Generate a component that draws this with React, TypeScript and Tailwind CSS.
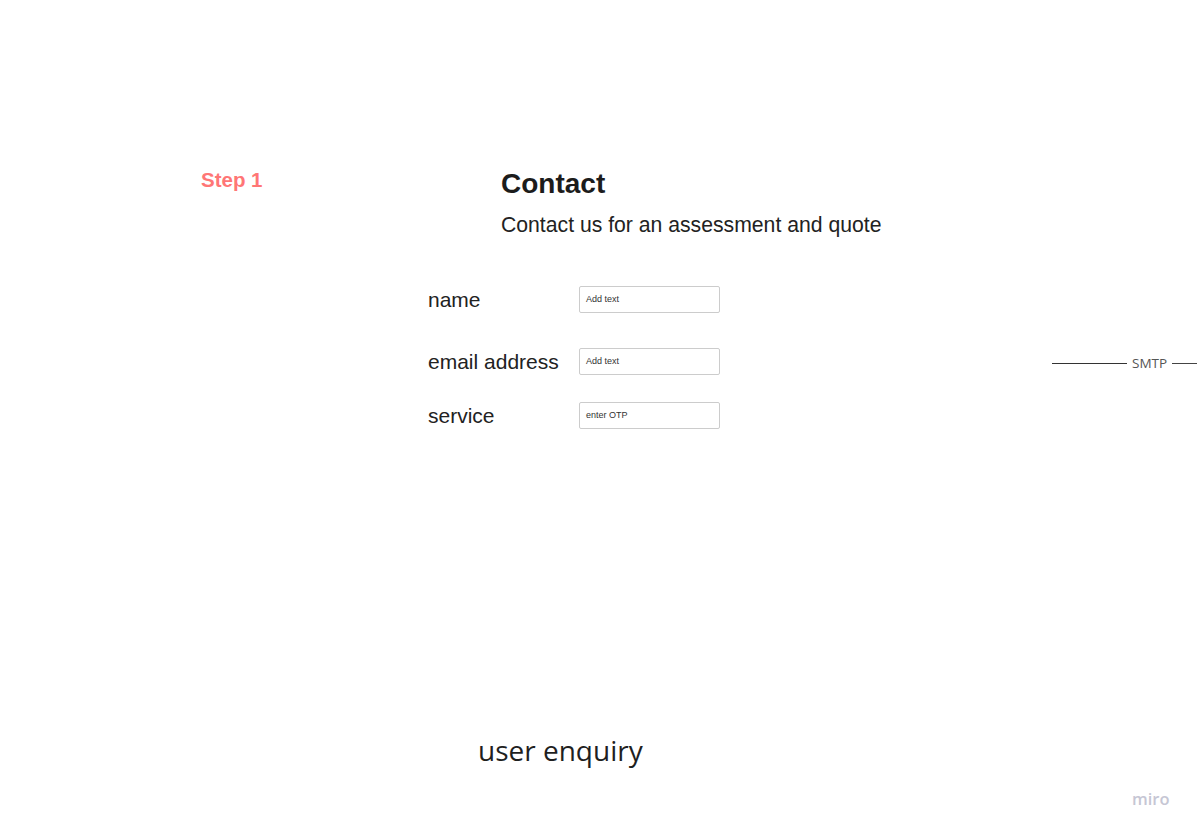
import React from 'react';

const arial = { fontFamily: '"Liberation Sans", Arial, sans-serif' };

const fields = [
  { label: 'name', placeholder: 'Add text', mt: 'mt-0' },
  { label: 'email address', placeholder: 'Add text', mt: 'mt-[35px]' },
  { label: 'service', placeholder: 'enter OTP', mt: 'mt-[27px]' },
];

const Field = ({ label, placeholder, mt }: { label: string; placeholder: string; mt: string }) => (
  <div className={`flex items-center ${mt}`}>
    <span className="w-[151px] text-[21px] leading-[24px] text-[#222]">{label}</span>
    <div className="flex h-[27px] w-[141px] items-center rounded-[2px] border border-[#cccccc] bg-white pl-[6px] text-[9px] text-[#333]">
      {placeholder}
    </div>
  </div>
);

export default function App() {
  return (
    <div className="relative h-[835px] w-[1197px] overflow-hidden bg-white" style={arial}>
      {/* board items */}
      <div className="absolute left-[201px] top-[170px] text-[20.5px] font-bold leading-none text-[#ff7676]">
        Step 1
      </div>

      <div className="absolute left-[428px] top-[170px] flex flex-col">
        <div className="pl-[73px]">
          <h1 className="text-[28px] font-bold leading-none text-[#1c1c1c]">Contact</h1>
          <p className="mt-[16px] text-[21.2px] leading-[21px] text-[#222]">
            Contact us for an assessment and quote
          </p>
        </div>
        <div className="mt-[51px] flex flex-col">
          {fields.map((f) => (
            <Field key={f.label} {...f} />
          ))}
        </div>
      </div>

      <div className="absolute left-[1052px] top-[355px] flex items-center font-['Open_Sans'] text-[13.5px] text-[#555]">
        <div className="h-px w-[75px] bg-[#333]" />
        <span className="px-[5px] leading-[16px]">SMTP</span>
        <div className="mt-[1px] h-px w-[30px] bg-[#444]" />
      </div>

      <div className="absolute left-[478px] top-[731px] font-['Open_Sans'] text-[28px] leading-[38px] text-[#1f1f1f]">
        user enquiry
      </div>

      <div className="absolute left-[1132px] top-[788px] font-['Open_Sans'] text-[16.5px] font-semibold leading-[22px] text-[#c6c6d4]">
        miro
      </div>
    </div>
  );
}
